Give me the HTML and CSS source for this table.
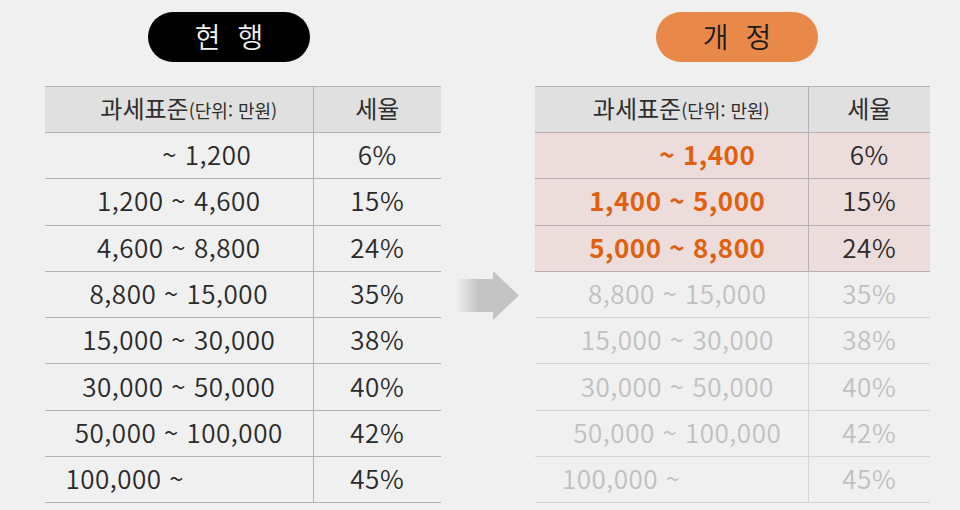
FILE: index.html
```html
<!DOCTYPE html>
<html lang="ko">
<head>
<meta charset="utf-8">
<link rel="stylesheet" href="styles.css">
</head>
<body>
<div class="page">
  <section class="side side-old">
    <div class="pill pill-old">현 행</div>
    <table class="rates">
      <colgroup><col class="col1"><col class="col2"></colgroup>
      <thead>
        <tr><th class="c1">과세표준<small>(단위: 만원)</small></th><th class="c2">세율</th></tr>
      </thead>
      <tbody>
        <tr><td class="c1 lead">~ 1,200</td><td class="c2">6%</td></tr>
        <tr><td class="c1">1,200 ~ 4,600</td><td class="c2">15%</td></tr>
        <tr><td class="c1">4,600 ~ 8,800</td><td class="c2">24%</td></tr>
        <tr><td class="c1">8,800 ~ 15,000</td><td class="c2">35%</td></tr>
        <tr><td class="c1">15,000 ~ 30,000</td><td class="c2">38%</td></tr>
        <tr><td class="c1">30,000 ~ 50,000</td><td class="c2">40%</td></tr>
        <tr><td class="c1">50,000 ~ 100,000</td><td class="c2">42%</td></tr>
        <tr><td class="c1 tail">100,000 ~</td><td class="c2">45%</td></tr>
      </tbody>
    </table>
  </section>
  <div class="arrow-col">
    <svg class="arrow" width="64" height="50" viewBox="0 0 64 50">
      <defs>
        <linearGradient id="ag" x1="0" x2="1" y1="0" y2="0">
          <stop offset="0" stop-color="#c4c4c4" stop-opacity="0"/>
          <stop offset="0.35" stop-color="#c4c4c4" stop-opacity="1"/>
          <stop offset="1" stop-color="#c4c4c4"/>
        </linearGradient>
      </defs>
      <path d="M0 8 H37 V0 L63 24.5 L37 49 V41 H0 Z" fill="url(#ag)"/>
    </svg>
  </div>
  <section class="side side-new">
    <div class="pill pill-new">개 정</div>
    <table class="rates rates-new">
      <colgroup><col class="col1"><col class="col2"></colgroup>
      <thead>
        <tr><th class="c1">과세표준<small>(단위: 만원)</small></th><th class="c2">세율</th></tr>
      </thead>
      <tbody>
        <tr class="hl"><td class="c1 lead">~ 1,400</td><td class="c2">6%</td></tr>
        <tr class="hl"><td class="c1">1,400 ~ 5,000</td><td class="c2">15%</td></tr>
        <tr class="hl"><td class="c1">5,000 ~ 8,800</td><td class="c2">24%</td></tr>
        <tr class="fade"><td class="c1">8,800 ~ 15,000</td><td class="c2">35%</td></tr>
        <tr class="fade"><td class="c1">15,000 ~ 30,000</td><td class="c2">38%</td></tr>
        <tr class="fade"><td class="c1">30,000 ~ 50,000</td><td class="c2">40%</td></tr>
        <tr class="fade"><td class="c1">50,000 ~ 100,000</td><td class="c2">42%</td></tr>
        <tr class="fade"><td class="c1 tail">100,000 ~</td><td class="c2">45%</td></tr>
      </tbody>
    </table>
  </section>
</div>
</body>
</html>
```
FILE: styles.css
```css
html, body {
  margin: 0;
  padding: 0;
  background: #f0f0f0;
}
body {
  width: 960px;
  height: 510px;
  overflow: hidden;
  font-family: "Noto Sans CJK KR", "Noto Sans", sans-serif;
  color: #2a2a2a;
}
.page {
  display: flex;
  padding-left: 45px;
  padding-top: 12px;
}
.side {
  display: flex;
  flex-direction: column;
}
.side-old { width: 396px; }
.side-new { width: 395px; }
.pill {
  width: 162px;
  height: 50px;
  border-radius: 25px;
  display: flex;
  align-items: center;
  justify-content: center;
  font-size: 28px;
  font-weight: 350;
  word-spacing: 9px;
  line-height: 1;
  padding-bottom: 2px;
  box-sizing: border-box;
  margin-bottom: 24px;
}
.pill-old {
  background: #000;
  color: #f2f2f2;
  margin-left: 103px;
}
.pill-new {
  background: #e8894a;
  color: #1a1a1a;
  margin-left: 121px;
}
.arrow-col {
  width: 94px;
  display: flex;
  padding-top: 259px;
  padding-left: 15px;
  box-sizing: border-box;
}
.arrow { display: block; }

.rates {
  border-collapse: collapse;
  table-layout: fixed;
  width: 100%;
}
.rates .col1 { width: 268px; }
.rates-new .col1 { width: 273px; }
.rates th, .rates td {
  padding: 0;
  text-align: center;
  border-bottom: 1px solid #b3b3b3;
  line-height: 1;
  white-space: nowrap;
}
.rates .c1 { border-right: 1px solid #b3b3b3; }
.rates thead tr {
  height: 46px;
  background: #e0e0e0;
}
.rates thead th {
  border-top: 1px solid #b3b3b3;
  font-weight: 400;
  font-size: 24px;
  color: #2e2e2e;
  padding-bottom: 3px;
}
.rates th small {
  font-size: 18px;
}
.rates thead th.c1 { padding-left: 20px; }
.rates tbody tr { height: 46.3px; }
.rates td {
  font-size: 26px;
  font-weight: 350;
  letter-spacing: 0.5px;
  padding-bottom: 3px;
}
.rates td.lead { padding-left: 56px; }
.rates td.tail { padding-right: 108px; }

.rates-new td.c1 { padding-left: 12px; }
.rates-new td.lead { padding-left: 72px; }
.rates-new td.tail { padding-right: 112px; }

.hl { background: #ecdcdc; }
.hl td { border-bottom-color: #b9aeae; }
.hl td.c1 {
  color: #e0600e;
  font-weight: 700;
}
.fade td {
  color: #c0c0c0;
  border-bottom-color: #d6d6d6;
}
.fade td.c1 { border-right-color: #d6d6d6; }
```
